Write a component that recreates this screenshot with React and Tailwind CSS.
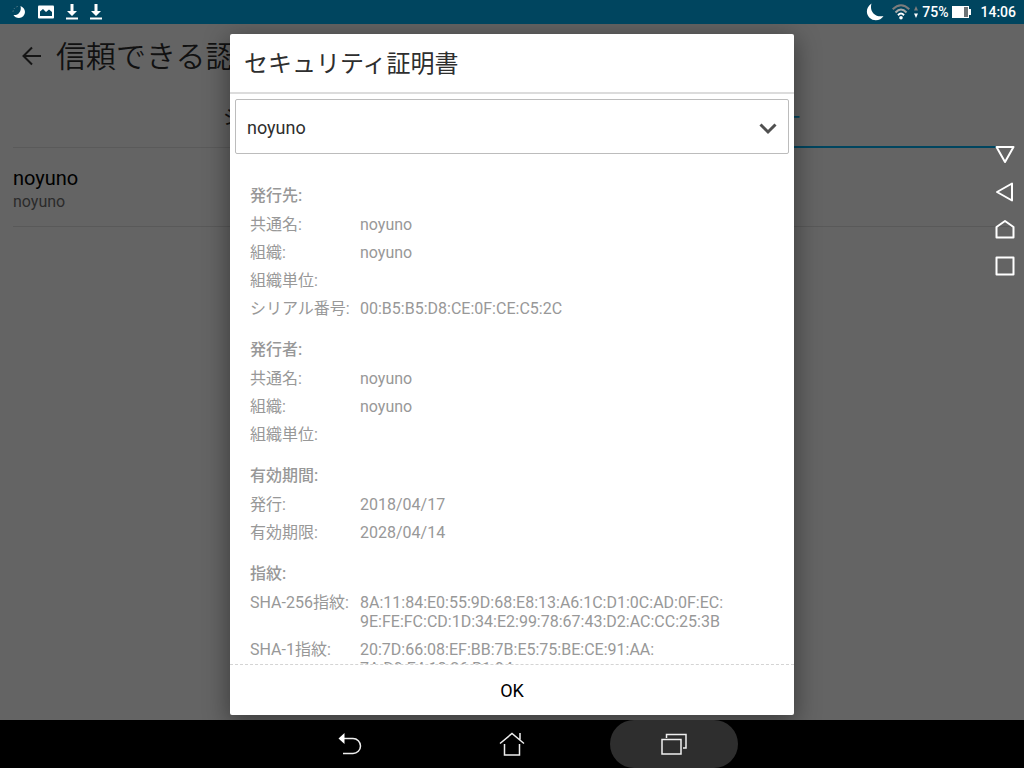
import React from "react";

const sections = [
  {
    title: "発行先:",
    rows: [
      ["共通名:", ["noyuno"]],
      ["組織:", ["noyuno"]],
      ["組織単位:", []],
      ["シリアル番号:", ["00:B5:B5:D8:CE:0F:CE:C5:2C"]],
    ],
  },
  {
    title: "発行者:",
    rows: [
      ["共通名:", ["noyuno"]],
      ["組織:", ["noyuno"]],
      ["組織単位:", []],
    ],
  },
  {
    title: "有効期間:",
    rows: [
      ["発行:", ["2018/04/17"]],
      ["有効期限:", ["2028/04/14"]],
    ],
  },
  {
    title: "指紋:",
    rows: [
      [
        "SHA-256指紋:",
        [
          "8A:11:84:E0:55:9D:68:E8:13:A6:1C:D1:0C:AD:0F:EC:",
          "9E:FE:FC:CD:1D:34:E2:99:78:67:43:D2:AC:CC:25:3B",
        ],
      ],
      ["SHA-1指紋:", ["20:7D:66:08:EF:BB:7B:E5:75:BE:CE:91:AA:", "7A:D9:F4:18:26:B1:94"]],
    ],
  },
];

function DownloadIcon() {
  return (
    <svg width="12" height="16" viewBox="0 0 12 16" fill="#fff" aria-hidden="true">
      <path d="M4.500 0h3v7H11l-5 5-5-5h3.500z" />
      <path d="M0 13.500h12V15.500H0z" />
    </svg>
  );
}

function StatusBar() {
  return (
    <header className="flex h-6 shrink-0 items-center justify-between bg-[#00455f] pr-2 pl-3 text-white">
      <div className="flex items-center gap-3">
        <svg width="14" height="14" viewBox="0 0 14 14" aria-hidden="true">
          <path d="M8.500 1c2.400 1 4.500 3 4.500 6a6 6 0 0 1-6 6c-2.500 0-4.500-1-5.500-3 4 .8 8.500-3 7-9z" fill="#fff" />
          <path d="M5.500 1.500a6 6 0 0 0-4.500 6" fill="none" stroke="#7a8f98" strokeDasharray="1 2" />
        </svg>
        <svg width="16" height="14" viewBox="0 0 16 14" aria-hidden="true">
          <rect x="0" y="0.500" width="16" height="13" rx="1" fill="#fff" />
          <path d="M2 11V6.500L5 4l3 3 3-2.500 3 2.500v4z" fill="#00455f" />
        </svg>
        <DownloadIcon />
        <DownloadIcon />
      </div>
      <div className="flex items-center text-[14px] leading-6 font-medium">
        <svg className="mr-2" width="18" height="18" viewBox="0 0 18 18" aria-hidden="true">
          <path d="M5.500 0.500C0 4-.5 11 3.500 14.800 8 19 15 17.500 17.500 13 9.500 15 3 8.500 5.500.5z" fill="#fff" />
        </svg>
        <svg className="mr-1" width="18" height="16" viewBox="0 0 18 16" fill="none" strokeWidth="2" aria-hidden="true">
          <path d="M.7 5.200Q9-2.800 17.300 5.200" stroke="#7c7c7c" />
          <path d="M3.500 8.500Q9 2.500 14.500 8.500" stroke="#a7aaa9" />
          <path d="M6 11.200Q9 8 12 11.200" stroke="#fff" />
          <circle cx="9" cy="13.800" r="1.800" fill="#fff" />
        </svg>
        <svg className="mr-1" width="4" height="12" viewBox="0 0 4 12" aria-hidden="true">
          <path d="M0 4.500L2 0l2 4.500z" fill="#7c7c7c" />
          <path d="M0 7.500h4L2 12z" fill="#fff" />
        </svg>
        <span className="mr-1">75%</span>
        <svg className="mr-2" width="20" height="14" viewBox="0 0 20 14" aria-hidden="true">
          <path d="M0 1h17v3h2v6h-2v3H0z" fill="#fff" />
          <path d="M12 2h4v10h-4z" fill="#6d7376" />
        </svg>
        <time>14:06</time>
      </div>
    </header>
  );
}

function SettingsPage() {
  return (
    <main className="flex flex-1 flex-col text-black">
      <div className="flex h-16 items-center gap-[14px] pl-[22px]">
        <button type="button" aria-label="戻る">
          <svg width="20" height="20" viewBox="0 0 20 20" fill="none" stroke="#151515" strokeWidth="2" aria-hidden="true">
            <path d="M19 10H2M10 1.500L1.500 10l8.500 8.500" />
          </svg>
        </button>
        <h1 className="pt-[2px] text-[30px] leading-10 font-[350] whitespace-nowrap text-[#111]">信頼できる認証情報</h1>
      </div>
      <div className="mr-[13px] ml-[13px] grid grid-cols-2 text-[20px]">
        <button type="button" className="h-[60px] border-b border-[#5a5a5a] text-[#111]">システム</button>
        <button type="button" className="h-[60px] border-b-2 border-[#00455f] pt-[2px] text-[#00455f]">ユーザー</button>
      </div>
      <div className="mx-[13px] flex h-[79px] flex-col justify-center border-b border-[#595959] pt-[6px]">
        <span className="text-[20px] leading-6">noyuno</span>
        <span className="text-[16px] leading-6 text-[#2b2b2b]">noyuno</span>
      </div>
    </main>
  );
}

function CertificateDialog() {
  return (
    <section
      role="dialog"
      aria-labelledby="dialog-title"
      className="flex max-h-full w-[564px] max-w-full flex-col overflow-hidden rounded-xs bg-white shadow-[0_6px_24px_2px_rgba(0,0,0,0.4)]"
    >
      <h2 id="dialog-title" className="shrink-0 border-b-2 border-[#dcdcdc] px-[14px] pt-3 pb-[10px] text-[24px] leading-9 text-[#2e2e2e]">
        セキュリティ証明書
      </h2>
      <div className="relative m-[5px] mb-0 shrink-0">
        <select
          aria-label="証明書"
          className="h-[55px] w-full appearance-none rounded-xs border border-[#bcbcbc] bg-white px-[11px] pt-[2px] text-[18px] text-[#2e2e2e]"
        >
          <option>noyuno</option>
        </select>
        <svg className="pointer-events-none absolute top-6 right-3" width="18" height="12" viewBox="0 0 18 12" fill="none" stroke="#505050" strokeWidth="3" aria-hidden="true">
          <path d="M1.500 1.500L9 9l7.500-7.500" />
        </svg>
      </div>
      <div className="flex min-h-0 flex-1 flex-col gap-[22px] overflow-hidden px-5 pt-8 text-[16px] leading-[19px] text-[#989898]">
        {sections.map((section) => (
          <div key={section.title} className="flex flex-col gap-[10px]">
            <h3 className="font-medium">{section.title}</h3>
            <dl className="flex flex-col gap-[9px]">
              {section.rows.map(([label, lines]) => (
                <div key={label} className="flex">
                  <dt className="w-[110px] shrink-0 whitespace-nowrap">{label}</dt>
                  <dd>
                    {lines.map((line) => (
                      <div key={line}>{line}</div>
                    ))}
                  </dd>
                </div>
              ))}
            </dl>
          </div>
        ))}
      </div>
      <button type="button" className="h-[51px] shrink-0 border-t border-dashed border-[#d4d4d4] text-[18px] text-black">
        OK
      </button>
    </section>
  );
}

function SideKeys() {
  const keys = [
    ["閉じる", "M1.500 2h17L10 17z"],
    ["戻る", "M17 1.500v17L2 10z"],
    ["ホーム", "M1.500 18.500V8L10 2l8.500 6v10.500z"],
    ["履歴", "M1.500 1.500h17v17h-17z"],
  ];
  return (
    <div className="absolute top-[121px] right-[9px] flex flex-col gap-[17px]">
      {keys.map(([name, d]) => (
        <button key={name} type="button" aria-label={name}>
          <svg className="block" width="20" height="20" viewBox="0 0 20 20" fill="none" stroke="#fff" strokeWidth="2" strokeLinejoin="round" aria-hidden="true">
            <path d={d} />
          </svg>
        </button>
      ))}
    </div>
  );
}

function NavigationBar() {
  const key = "flex h-12 w-32 items-center justify-center rounded-full";
  return (
    <nav className="flex h-12 shrink-0 justify-center gap-[34px] bg-black">
      <button type="button" aria-label="戻る" className={key}>
        <svg width="24" height="24" viewBox="0 0 24 24" fill="none" stroke="#eee" strokeWidth="1.500" aria-hidden="true">
          <path d="M5 6.500h10a7.500 7.500 0 0 1 0 15H5" />
          <path d="M0.500 6.500L6.500 1v11z" fill="#fff" stroke="none" />
        </svg>
      </button>
      <button type="button" aria-label="ホーム" className={key}>
        <svg width="26" height="24" viewBox="0 0 26 24" fill="none" stroke="#eee" strokeWidth="1.500" aria-hidden="true">
          <path d="M1 11.500L13 1.500l12 10M21 7.500V1M5.500 12v11h15V12" />
        </svg>
      </button>
      <button type="button" aria-label="最近使ったアプリ" className="flex h-12 w-32 items-center justify-center rounded-full bg-[#2e2e2e]">
        <svg width="26" height="22" viewBox="0 0 26 22" fill="none" stroke="#f0f0f0" strokeWidth="1.500" aria-hidden="true">
          <path d="M1 6.500h19v14.500H1z" />
          <path d="M5.500 5V1.500h19.500V15h-3" />
        </svg>
      </button>
    </nav>
  );
}

export default function App() {
  return (
    <div className="flex h-screen flex-col bg-[#646464] font-[Roboto,'Noto_Sans_CJK_JP',sans-serif]" lang="ja">
      <StatusBar />
      <div className="relative flex min-h-0 flex-1 flex-col overflow-hidden">
        <SettingsPage />
        <div className="absolute inset-0 flex justify-center pt-[10px] pb-[5px]">
          <CertificateDialog />
        </div>
        <SideKeys />
      </div>
      <NavigationBar />
    </div>
  );
}
